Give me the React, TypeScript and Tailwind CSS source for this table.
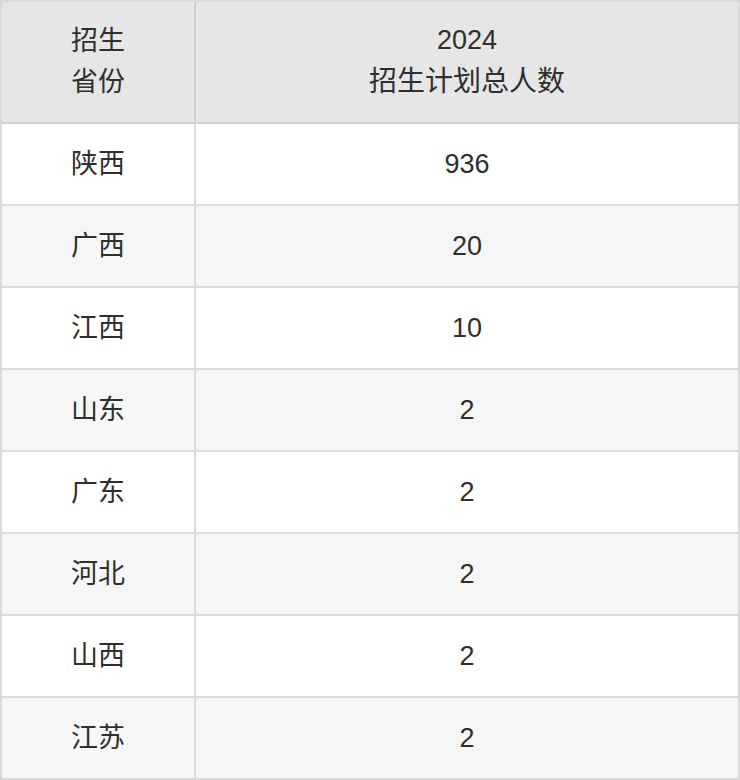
import React from "react";

const rows: [string, string][] = [
  ["陕西", "936"],
  ["广西", "20"],
  ["江西", "10"],
  ["山东", "2"],
  ["广东", "2"],
  ["河北", "2"],
  ["山西", "2"],
  ["江苏", "2"],
];

export default function App() {
  return (
    <div
      className="w-[740px] h-[780px] bg-white text-[#2f2f2f] text-[27px] leading-[41px]"
      style={{ fontFamily: '"Liberation Sans", "Noto Sans CJK SC", sans-serif' }}
    >
      <div className="border-2 border-[#d9d9d9] flex flex-col">
        <div className="flex h-[122px] bg-[#e6e6e6] border-b-2 border-[#d0d0d0]">
          <div className="w-[194px] border-r-2 border-[#d0d0d0] flex items-center justify-center text-center">
            <div className="-mt-[1px]">
              招生
              <br />
              省份
            </div>
          </div>
          <div className="flex-1 flex items-center justify-center text-center">
            <div className="-mt-[1px]">
              2024
              <br />
              <span className="text-[28px]">招生计划总人数</span>
            </div>
          </div>
        </div>
        {rows.map(([p, n], i) => (
          <div
            key={p + i}
            className={
              "flex " +
              (i < rows.length - 1 ? "h-[82px] border-b-2 border-[#dcdcdc] " : "h-[80px] ") +
              (i % 2 === 1 ? "bg-[#f6f6f6]" : "bg-white")
            }
          >
            <div className="w-[194px] border-r-2 border-[#dcdcdc] flex items-center justify-center">
              {p}
            </div>
            <div className="flex-1 flex items-center justify-center">{n}</div>
          </div>
        ))}
      </div>
    </div>
  );
}
